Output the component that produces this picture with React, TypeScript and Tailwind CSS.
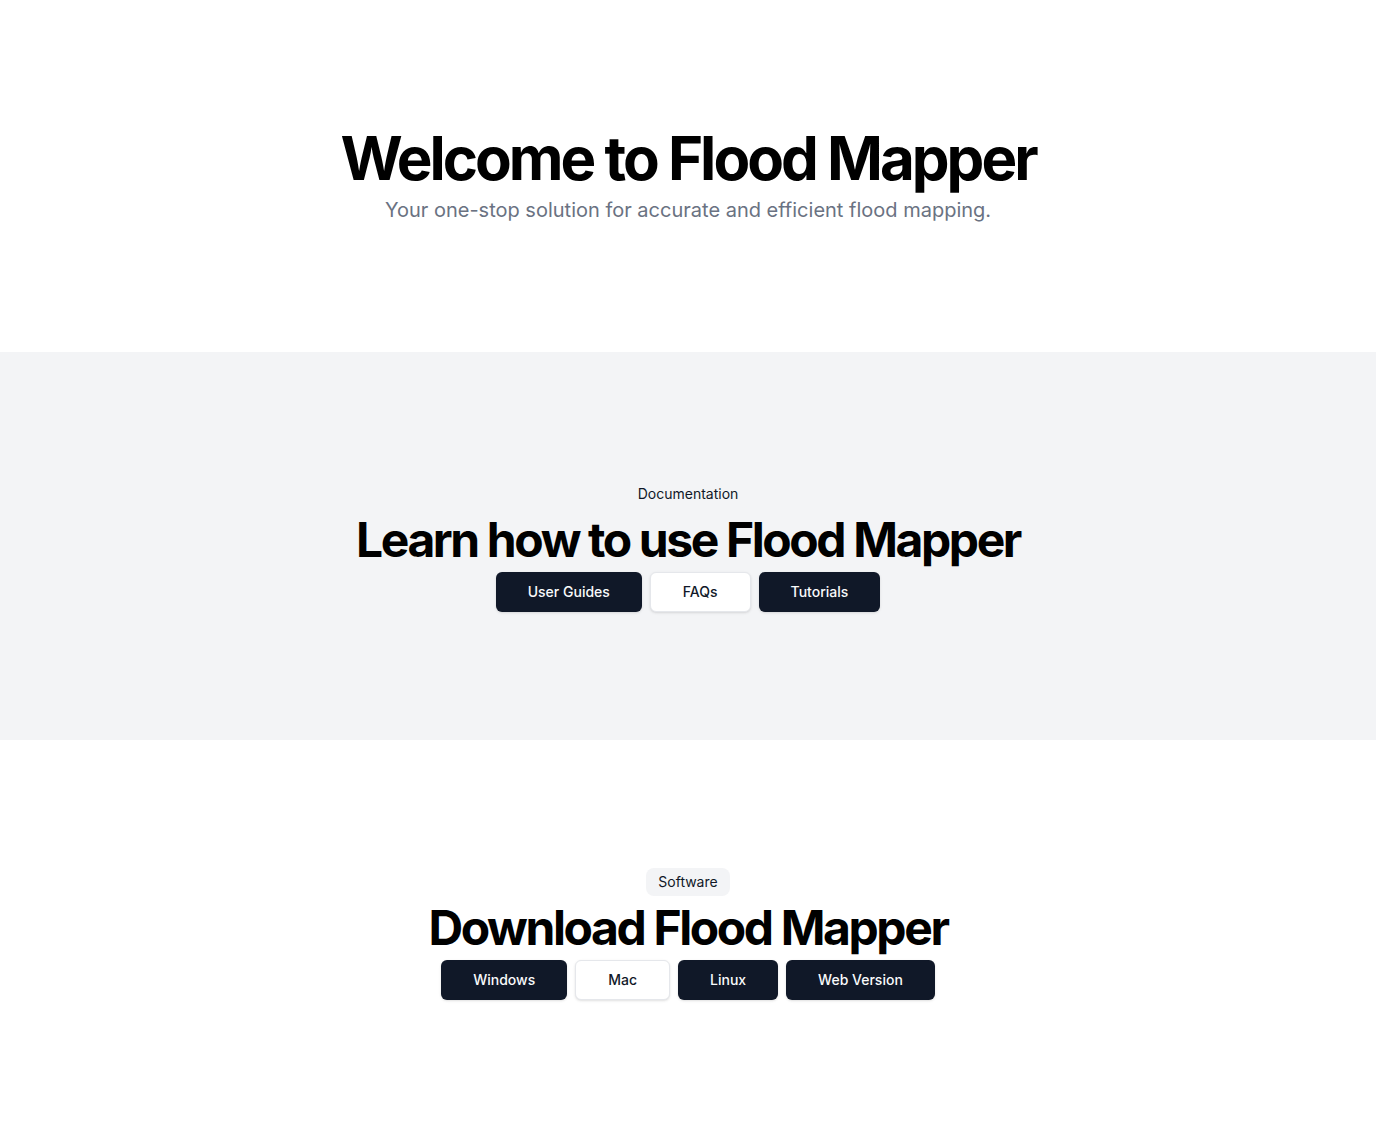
import React from "react";

const dark =
  "inline-flex h-10 items-center justify-center rounded-md bg-gray-900 px-8 text-sm font-medium text-gray-50 shadow";
const outline =
  "inline-flex h-10 items-center justify-center rounded-md border border-gray-200 bg-white px-8 text-sm font-medium text-gray-900 shadow-sm";

function Section({
  label,
  title,
  buttons,
  className,
}: {
  label: string;
  title: string;
  buttons: { text: string; outline?: boolean }[];
  className: string;
}) {
  return (
    <section className={`w-full py-32 ${className}`}>
      <div className="flex flex-col items-center space-y-2 px-4 text-center">
        <div className="inline-block rounded-lg bg-gray-100 px-3 py-1 text-sm leading-5 text-gray-900">
          {label}
        </div>
        <h2 className="text-5xl leading-none font-bold tracking-tighter text-black">
          {title}
        </h2>
        <div className="flex gap-2">
          {buttons.map((b) => (
            <a key={b.text} href="#" className={b.outline ? outline : dark}>
              {b.text}
            </a>
          ))}
        </div>
      </div>
    </section>
  );
}

export default function App() {
  return (
    <main
      className="flex min-h-screen flex-col bg-white"
      style={{ fontFamily: "Inter, 'Noto Sans', sans-serif" }}
    >
      <section className="w-full py-32">
        <div className="flex flex-col items-center space-y-2 px-4 text-center">
          <h1 className="text-6xl leading-none font-bold tracking-tighter text-black">
            Welcome to Flood Mapper
          </h1>
          <p className="text-xl leading-7 text-gray-500">
            Your one-stop solution for accurate and efficient flood mapping.
          </p>
        </div>
      </section>

      <Section
        className="bg-gray-100"
        label="Documentation"
        title="Learn how to use Flood Mapper"
        buttons={[
          { text: "User Guides" },
          { text: "FAQs", outline: true },
          { text: "Tutorials" },
        ]}
      />

      <Section
        className="bg-white"
        label="Software"
        title="Download Flood Mapper"
        buttons={[
          { text: "Windows" },
          { text: "Mac", outline: true },
          { text: "Linux" },
          { text: "Web Version" },
        ]}
      />
    </main>
  );
}
